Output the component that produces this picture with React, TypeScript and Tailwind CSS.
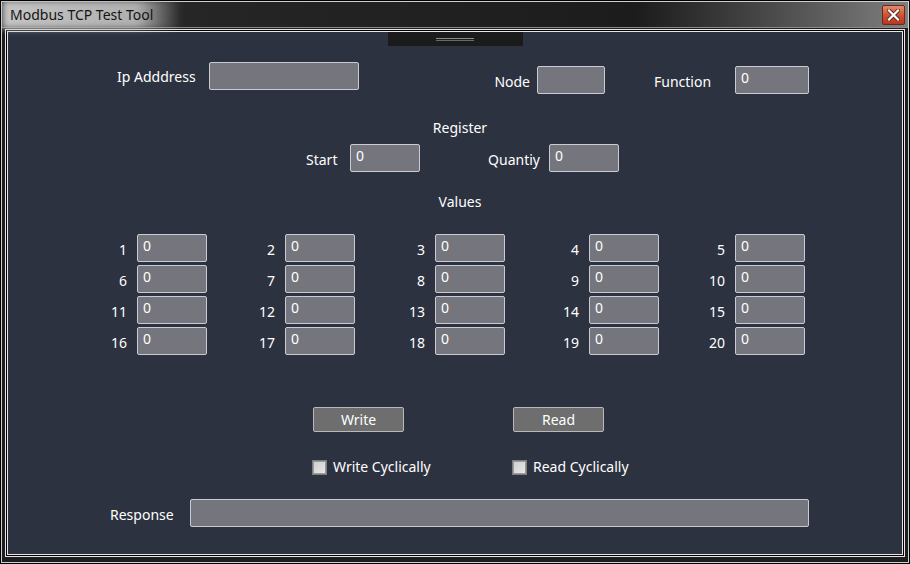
import React from 'react';

const font = { fontFamily: '"Noto Sans", "Open Sans", sans-serif' };

function Field({ value = '', className = '' }: { value?: string; className?: string }) {
  return (
    <div
      className={`h-[28px] shrink-0 rounded-[2px] border border-[#c9cad3] bg-[#75767d] pl-[5px] text-[14px] leading-[22px] text-white ${className}`}
    >
      {value}
    </div>
  );
}

function Check({ label }: { label: string }) {
  return (
    <div className="flex items-center">
      <div className="flex h-[15px] w-[15px] items-center justify-center border border-[#7d7d7d] bg-[#9a9a9a]">
        <div className="h-[11px] w-[11px] bg-gradient-to-br from-[#cfcfcf] to-[#e8e8e8]" />
      </div>
      <span className="ml-[6px] text-[14px] leading-[18px] text-white">{label}</span>
    </div>
  );
}

const cols = [
  { label: 'w-[40px]', input: 'w-[70px]' },
  { label: 'w-[78px]', input: 'w-[70px]' },
  { label: 'w-[80px]', input: 'w-[70px]' },
  { label: 'w-[84px]', input: 'w-[70px]' },
  { label: 'w-[76px]', input: 'w-[70px]' },
];

export default function App() {
  const rows = [0, 1, 2, 3];

  return (
    <div className="h-[564px] w-[910px] overflow-hidden border border-black" style={font}>
      <div className="flex h-full flex-col border border-[#cfcfcf] bg-[#1e1e1e]">
        {/* title bar */}
        <div className="relative flex h-[26px] shrink-0 items-center border-b border-[#8a8a8a] bg-gradient-to-r from-[#2a2a2a] via-[#1c1c1c] via-70% to-[#7f7f7f]">
          <div className="absolute -top-[2px] left-0 h-[29px] w-[180px] bg-gradient-to-r from-[#c4c4c4] via-[#b0b0b0] via-75% to-transparent blur-[3px]" />
          <span className="relative ml-[8px] text-[14px] leading-[20px] text-[#141414]">Modbus TCP Test Tool</span>
          <div className="ml-auto mr-[3px] flex h-[20px] w-[23px] items-center justify-center rounded-[2px] border border-[#6b2a1a] bg-gradient-to-b from-[#e58a6c] via-[#cf5232] to-[#b8381c]">
            <svg width="13" height="12" viewBox="0 0 13 12">
              <path d="M2 1.5 L11 10.5 M11 1.5 L2 10.5" stroke="#5a2a20" strokeWidth="4" strokeLinecap="square" />
              <path d="M2 1.5 L11 10.5 M11 1.5 L2 10.5" stroke="#ffffff" strokeWidth="2.2" strokeLinecap="square" />
            </svg>
          </div>
        </div>

        {/* body */}
        <div className="flex flex-1 flex-col px-[3px] pb-[5px] pt-[1px]">
          <div className="flex flex-1 flex-col border border-[#e6e6e6] bg-black p-[1px]">
            <div className="flex flex-1 flex-col border border-[#e6e6e6] bg-[#2d3240] text-white">
              {/* drag handle */}
              <div className="mx-auto flex h-[14px] w-[135px] flex-col items-center justify-center gap-[1px] bg-[#1b1b1b]">
                <div className="h-[1px] w-[38px] bg-[#8a8a8a]" />
                <div className="h-[1px] w-[38px] bg-[#6a6a6a]" />
              </div>

              {/* connection row */}
              <div className="mt-[16px] flex h-[32px] text-[14px] leading-[20px]">
                <div className="ml-[109px] flex items-center self-start">
                  <span className="w-[92px] pt-[2px]">Ip Adddress</span>
                  <Field className="w-[150px]" />
                </div>
                <div className="flex items-center self-end">
                  <span className="w-[178px] pr-[7px] pt-[3px] text-right">Node</span>
                  <Field className="w-[68px]" />
                </div>
                <div className="ml-[49px] flex items-center self-end">
                  <span className="w-[81px] pt-[3px]">Function</span>
                  <Field value="0" className="w-[74px]" />
                </div>
              </div>

              {/* register */}
              <div className="mt-[24px] pl-[10px] text-center text-[14px] leading-[20px]">Register</div>
              <div className="mt-[6px] flex items-center text-[14px] leading-[20px]">
                <span className="ml-[298px] w-[44px] pt-[4px]">Start</span>
                <Field value="0" className="w-[70px]" />
                <span className="w-[129px] pr-[9px] pt-[4px] text-right">Quantiy</span>
                <Field value="0" className="w-[70px]" />
              </div>

              {/* values */}
              <div className="mt-[20px] pl-[10px] text-center text-[14px] leading-[20px]">Values</div>
              <div className="mt-[22px] flex flex-col gap-[3px]">
                {rows.map((r) => (
                  <div key={r} className="ml-[89px] flex">
                    {cols.map((c, i) => (
                      <div key={i} className="flex">
                        <span className={`${c.label} pr-[10px] pt-[6px] text-right text-[14px] leading-[20px]`}>
                          {r * 5 + i + 1}
                        </span>
                        <Field value="0" className={c.input} />
                      </div>
                    ))}
                  </div>
                ))}
              </div>

              {/* actions */}
              <div className="mt-[52px] flex gap-[109px] pl-[305px]">
                <button className="h-[25px] w-[91px] rounded-[2px] border border-[#b9b9b9] bg-[#6e6e6e] text-[14px] leading-[20px] text-white">
                  Write
                </button>
                <button className="h-[25px] w-[91px] rounded-[2px] border border-[#b9b9b9] bg-[#6e6e6e] text-[14px] leading-[20px] text-white">
                  Read
                </button>
              </div>
              <div className="mt-[26px] flex pl-[304px]">
                <div className="w-[200px]">
                  <Check label="Write Cyclically" />
                </div>
                <Check label="Read Cyclically" />
              </div>

              {/* response */}
              <div className="mt-[23px] flex items-center text-[14px] leading-[20px]">
                <span className="ml-[102px] w-[80px] pt-[4px]">Response</span>
                <Field className="w-[619px]" />
              </div>
            </div>
          </div>
        </div>
      </div>
    </div>
  );
}
